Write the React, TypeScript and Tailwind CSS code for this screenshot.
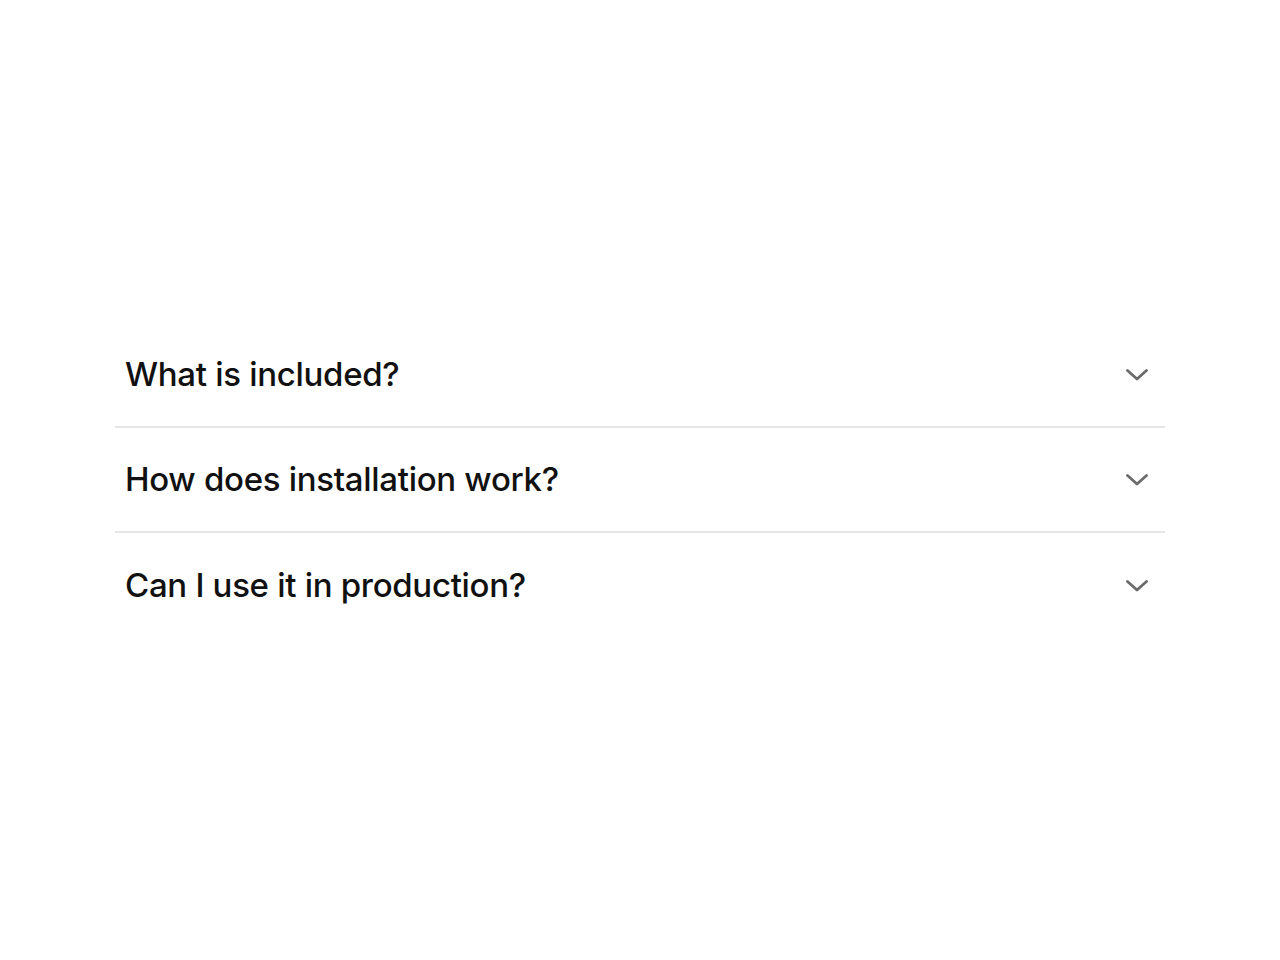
import React from "react";

const items = ["What is included?", "How does installation work?", "Can I use it in production?"];

function Chevron() {
  return (
    <svg width="22" height="14" viewBox="0 0 22 14" fill="none" className="shrink-0">
      <path d="M1.5 2.5 L11 11 L20.5 2.5" stroke="#6b6b6b" strokeWidth="2.8" strokeLinecap="round" strokeLinejoin="round" />
    </svg>
  );
}

export default function App() {
  return (
    <div className="min-h-[960px] w-full bg-white flex items-center justify-center" style={{ fontFamily: "Inter, 'Noto Sans', sans-serif" }}>
      <div className="w-[1050px] flex flex-col">
        {items.map((q, i) => (
          <div
            key={q}
            className={`flex items-center justify-between h-[105px] pt-[2px] pl-[10px] pr-[17px] ${i < items.length - 1 ? "border-b-2 border-[#e6e6e6]" : ""}`}
          >
            <span className="text-[33px] font-medium text-[#111] tracking-[-0.3px]">{q}</span>
            <Chevron />
          </div>
        ))}
      </div>
    </div>
  );
}
